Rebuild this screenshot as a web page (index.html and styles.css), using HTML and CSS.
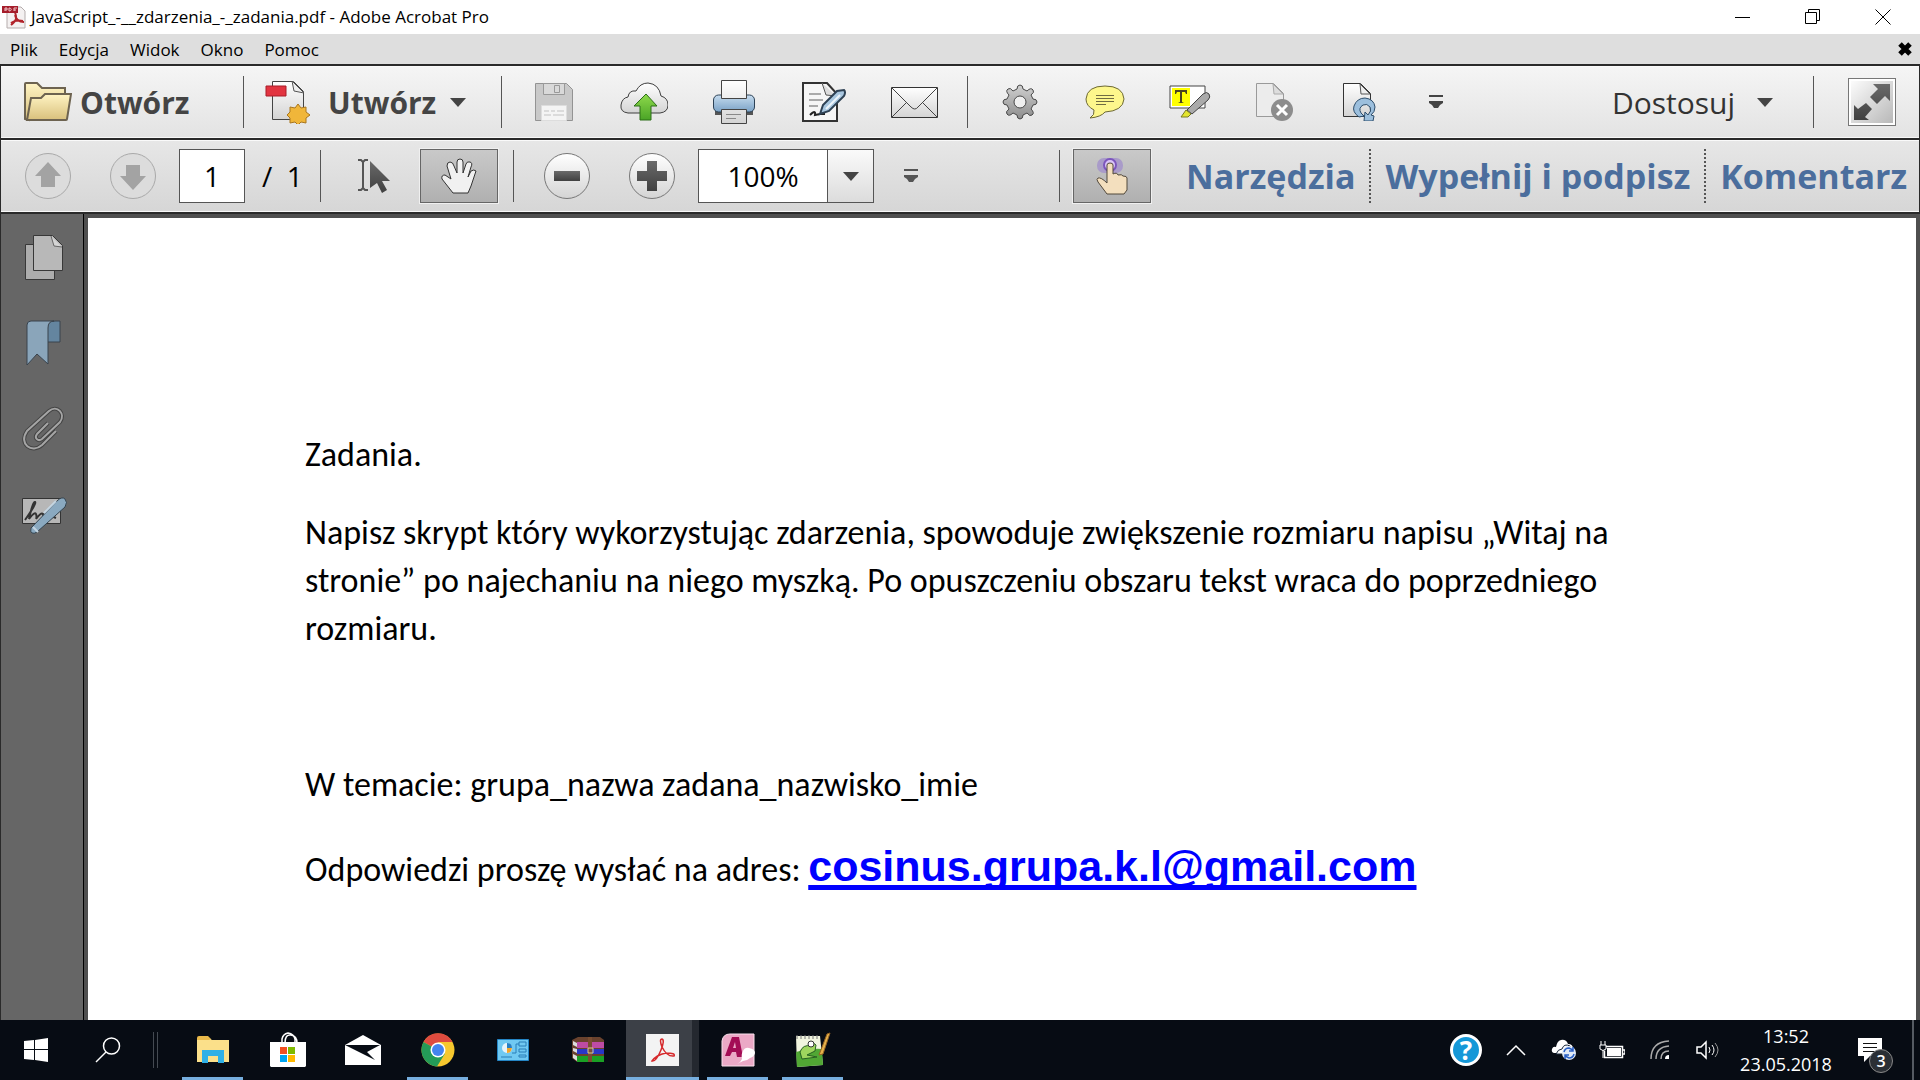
FILE: index.html
```html
<!DOCTYPE html>
<html lang="pl">
<head>
<meta charset="utf-8">
<title>JavaScript_-__zdarzenia_-_zadania.pdf - Adobe Acrobat Pro</title>
<link rel="stylesheet" href="styles.css">
</head>
<body>
<svg class="defs" aria-hidden="true">
  <defs>
    <linearGradient id="paper" x1="0" y1="0" x2="0" y2="1"><stop offset="0" stop-color="#fff"/><stop offset="1" stop-color="#d4d4d4"/></linearGradient>
    <linearGradient id="steel" x1="0" y1="0" x2="0" y2="1"><stop offset="0" stop-color="#d0d0d0"/><stop offset="1" stop-color="#8c8c8c"/></linearGradient>
    <linearGradient id="sky" x1="0" y1="0" x2="0" y2="1"><stop offset="0" stop-color="#c6dcef"/><stop offset="1" stop-color="#7aa2c6"/></linearGradient>
    <linearGradient id="sand" x1="0" y1="0" x2="0" y2="1"><stop offset="0" stop-color="#fff4c4"/><stop offset="1" stop-color="#d8c07c"/></linearGradient>
    <linearGradient id="leaf" x1="0" y1="0" x2="0" y2="1"><stop offset="0" stop-color="#8fda4c"/><stop offset="1" stop-color="#4aa426"/></linearGradient>
    <linearGradient id="ink" x1="0" y1="0" x2="0" y2="1"><stop offset="0" stop-color="#6a6a6a"/><stop offset="1" stop-color="#404040"/></linearGradient>
  </defs>
</svg>

<header class="titlebar">
  <svg class="app-icon" viewBox="0 0 24 24"><path d="M5 2h14l4 4v17H5z" fill="#f4f1f1" stroke="#b5adad"/><path d="M13 7c2 6 2 8-4 13M13 10c1 5 4 7 9 7M9 18c4-3 7-3 12-2" fill="none" stroke="#b1242b" stroke-width="2"/><path d="M0 1h16v7H0z" fill="#a51d2b"/><path d="M3 6V3h2v2H3M7 3v3c3 0 3-3 0-3M12 6V3h3M12 5h2" stroke="#f0c8cc" fill="none"/></svg>
  <h1 class="title">JavaScript_-__zdarzenia_-_zadania.pdf - Adobe Acrobat Pro</h1>
  <div class="window-controls">
    <button aria-label="Minimalizuj"><svg width="16" height="16" viewBox="0 0 16 16"><path d="M0 8.500h15" stroke="#000"/></svg></button>
    <button aria-label="Przywróć"><svg width="16" height="16" viewBox="0 0 16 16"><path d="M.5 3.500h11v11H.5zM3.500 3V.5h11v11H12" fill="none" stroke="#000"/></svg></button>
    <button aria-label="Zamknij"><svg width="16" height="16" viewBox="0 0 16 16"><path d="M.5.5l15 15M15.500.5l-15 15" stroke="#000"/></svg></button>
  </div>
</header>

<nav class="menubar">
  <button>Plik</button><button>Edycja</button><button>Widok</button><button>Okno</button><button>Pomoc</button>
  <button class="close-doc" aria-label="Zamknij dokument"><svg width="14" height="14" viewBox="0 0 14 14"><path d="M2 2l10 10M12 2L2 12" stroke="#000" stroke-width="5"/></svg></button>
</nav>

<section class="toolbar toolbar-main">
  <button class="labelled open"><svg width="48" height="40" viewBox="0 0 48 40"><path d="M1 37V2q0-1 1-1h11l5 5h23v10H10L5 38z" fill="url(#sand)" stroke="#6d6350" stroke-width="2"/><path d="M3 38l4-22h10l4-4h26l-4 25q0 1-1 1z" fill="url(#sand)" stroke="#6d6350" stroke-width="2"/></svg><span>Otwórz</span></button>
  <i class="sep"></i>
  <button class="labelled create"><svg width="46" height="44" viewBox="0 0 46 44"><path d="M7.500 1.500h21l10 10v28h-31z" fill="url(#paper)" stroke="#444"/><path d="M27 1l2 10 10 2z" fill="#eee" stroke="#555"/><path d="M1 6h20v10H1z" fill="#e23440" stroke="#a81d28"/><path d="M33 24l3 4 5-1v5l4 3-4 3v5l-5-1-3 3-3-3-5 1v-5l-3-3 3-3v-5l5 1z" fill="#f0b63a" stroke="#a9761f"/></svg><span>Utwórz</span><svg class="caret" width="16" height="9" viewBox="0 0 16 9"><path d="M0 0h16L8 9z" fill="#444"/></svg></button>
  <i class="sep"></i>
  <div class="tools wide">
    <button aria-label="Zapisz"><svg width="40" height="40" viewBox="0 0 40 40"><path d="M1.500 1.500h31l6 6v31h-37z" fill="#c9c9c9" stroke="#939393"/><path d="M9.500 1.500h21v11h-21zM20.500 3.500h5v7h-5z" fill="#d9d9d9" stroke="#999"/><path d="M7.500 23.500h25v15h-25z" fill="#f4f4f4" stroke="#ddd"/><path d="M10 29h5m2 0h4m2 0h7M10 33h7m2 0h11" stroke="#c2c2c2"/></svg></button>
    <button aria-label="Wyślij do chmury"><svg width="48" height="40" viewBox="0 0 48 40"><path d="M8 31q-8-1-7-8 1-7 7-8 1-7 8-6 4-8 12-8 11 1 13 13 7 2 7 9t-8 8z" fill="url(#paper)" stroke="#3f3f3f"/><path d="M26 12l11 12h-6v14H20V24h-6z" fill="url(#leaf)" stroke="#2c6e18" stroke-width="1"/></svg></button>
    <button aria-label="Drukuj"><svg width="42" height="44" viewBox="0 0 42 44"><path d="M2 31h38v4H2z" fill="#555"/><rect x=".5" y="15" width="41" height="17" rx="5" fill="url(#sky)" stroke="#2d4256"/><path d="M8.500.5h25v18h-25zM8.500 29.500h25v14h-25z" fill="url(#paper)" stroke="#444"/><path d="M13 34.500h15M13 38.500h10" stroke="#888"/></svg></button>
    <button aria-label="Podpisz"><svg width="44" height="42" viewBox="0 0 44 42"><path d="M1 2h24l10 11v27H1z" fill="#f6f6f6" stroke="#333" stroke-width="2"/><path d="M20 2l4 12 10 1" fill="#ddd" stroke="#555"/><path d="M7 13h12M7 19h14M7 25h9" stroke="#aaa" stroke-width="2"/><path d="M8 34q6-6 5 0l5-1h5" fill="none" stroke="#222" stroke-width="2"/><path d="M18 33l3-9 14-14 7-1q2 2 0 6L27 30z" fill="#a9c7e0" stroke="#2e4154" stroke-width="2"/><path d="M24 28l14-14" stroke="#eef5fb" stroke-width="2"/></svg></button>
    <button aria-label="E-mail"><svg width="47" height="31" viewBox="0 0 47 31"><path d="M.5.5h46v30H.5z" fill="url(#paper)" stroke="#333"/><path d="M1 30l14-14M46 30L32 16M1 1l19 19q4 4 7 0L46 1" fill="none" stroke="#444"/></svg></button>
  </div>
  <i class="sep"></i>
  <div class="tools">
    <button aria-label="Ustawienia"><svg width="36" height="36" viewBox="0 0 36 36"><path d="M15 5q0-4 3-4t3 4l4 2q4-4 6-1 2 2-2 5l2 4q4 0 4 3t-4 3l-2 4q4 4 1 6-2 2-5-2l-4 2q0 4-3 4t-3-4l-4-2q-4 4-6 1-2-2 2-5l-2-4q-4 0-4-3t4-3l2-4q-4-4-1-6 2-2 5 2z" fill="url(#steel)" stroke="#484848"/><circle cx="18" cy="18" r="6" fill="#efefef" stroke="#484848"/></svg></button>
    <button aria-label="Komentarz"><svg width="40" height="34" viewBox="0 0 40 34"><path d="M5 33q5-3 4-8Q1 21 1 14 2 1 20 1t19 13q-1 12-19 13-4 5-15 6z" fill="#fdf78c" stroke="#6c6834" stroke-width="1"/><path d="M11 10.500h18M11 13.500h18M11 16.500h18M11 19.500h10" stroke="#706c42"/></svg></button>
    <button aria-label="Wyróżnij tekst"><svg width="42" height="34" viewBox="0 0 42 34"><path d="M1 1h35v22H1z" fill="#fff" stroke="#444" stroke-width="1"/><path d="M3 3h18v18H3z" fill="#ff0"/><path d="M6 9V5h12v4h-1l-1-2h-3v10l2 1H9l2-1V7H8L7 9z" fill="#4a4420"/><path d="M18 25l16-16q4-3 6 0t-1 6L23 29z" fill="#aaa" stroke="#444"/><path d="M12 32l5-7 5 4-3 3z" fill="#e4e52d" stroke="#777a24"/></svg></button>
    <button aria-label="Usuń strony"><svg width="38" height="38" viewBox="0 0 38 38"><path d="M.5.5h17l10 10v23H.5z" fill="#ececec" stroke="#9a9a9a"/><path d="M17 1l1 10h9z" fill="#ddd" stroke="#aaa"/><circle cx="26" cy="27" r="11" fill="#8d8d8d"/><path d="M21 22l10 10M31 22L21 32" stroke="#fff" stroke-width="3"/></svg></button>
    <button aria-label="Obróć strony"><svg width="34" height="38" viewBox="0 0 34 38"><path d="M.5.5h17l10 10v23H.5z" fill="url(#paper)" stroke="#333"/><path d="M17 1l1 10h9z" fill="#eee" stroke="#555"/><path d="M16 34Q9 29 11 23q3-8 11-8 9 1 10 9 0 5-4 8l3 1-1 5h-9l1-9 3 3q4-4 2-8-3-4-7-2-5 3-2 8l3 3z" fill="#9cbfdd" stroke="#2d4d6b"/></svg></button>
  </div>
  <button class="more" aria-label="Więcej"><svg width="16" height="16" viewBox="0 0 16 16"><path d="M1 1h14v2H1zM1 7h14v2l-3 2-2 3H6l-2-3-3-2z" fill="#444"/></svg></button>
  <div class="right">
    <button class="customize">Dostosuj<svg class="caret" width="16" height="9" viewBox="0 0 16 9"><path d="M0 0h16L8 9z" fill="#444"/></svg></button>
    <i class="sep"></i>
    <button class="fullscreen" aria-label="Tryb czytania"><svg width="42" height="42" viewBox="0 0 42 42"><path d="M22 3h17v17l-5-5-8 8-7-7 8-8zM3 39V24l4 4 8-6 6 6-7 8 4 3z" fill="url(#ink)"/></svg></button>
  </div>
</section>

<section class="toolbar toolbar-nav">
  <div class="tools">
    <button aria-label="Poprzednia strona"><svg width="48" height="48" viewBox="0 0 48 48"><circle cx="24" cy="24" r="22.500" fill="#dcdcdc" stroke="#a9a9a9"/><path d="M24 10l13 14h-6v11H17V24h-6z" fill="#a3a3a3"/></svg></button>
    <button aria-label="Następna strona"><svg width="48" height="48" viewBox="0 0 48 48"><circle cx="24" cy="24" r="22.500" fill="#dcdcdc" stroke="#a9a9a9"/><path d="M24 38L11 24h6V13h14v11h6z" fill="#a3a3a3"/></svg></button>
  </div>
  <input class="page-number" aria-label="Numer strony" value="1">
  <span class="page-total">/&nbsp; 1</span>
  <i class="sep"></i>
  <button class="select" aria-label="Zaznacz"><svg width="34" height="34" viewBox="0 0 34 34"><path d="M1 1h3l2 2 2-2h3M6 3v26M1 31h3l2-2 2 2h3" fill="none" stroke="#555" stroke-width="2"/><path d="M13 2l20 20h-8l5 9-5 3-5-10-7 5z" fill="url(#ink)"/></svg></button>
  <button class="pressed hand" aria-label="Rączka"><svg width="38" height="36" viewBox="0 0 38 36"><path d="M13 35L2 21q-1-4 3-4l6 4L7 8q0-4 3-4t4 4l3 7V4q0-3 3-3t3 3v11l3-9q1-3 4-2t1 5l-3 10 3-6q3-2 5 0l-5 15-3 7z" fill="#f1f1f1" stroke="#333"/></svg></button>
  <i class="sep"></i>
  <div class="tools zoom">
    <button aria-label="Pomniejsz"><svg width="48" height="48" viewBox="0 0 48 48"><circle cx="24" cy="24" r="22.500" fill="url(#paper)" stroke="#777"/><path d="M11 19h26v10H11z" fill="url(#ink)"/></svg></button>
    <button aria-label="Powiększ"><svg width="48" height="48" viewBox="0 0 48 48"><circle cx="24" cy="24" r="22.500" fill="url(#paper)" stroke="#777"/><path d="M19 9h10v10h10v10H29v10H19V29H9V19h10z" fill="url(#ink)"/></svg></button>
  </div>
  <div class="zoom-box"><input aria-label="Powiększenie" value="100%"><button aria-label="Wybierz powiększenie"><svg width="16" height="9" viewBox="0 0 16 9"><path d="M0 0h16L8 9z" fill="#444"/></svg></button></div>
  <button class="more" aria-label="Więcej"><svg width="16" height="16" viewBox="0 0 16 16"><path d="M1 1h14v2H1zM1 7h14v2l-3 2-2 3H6l-2-3-3-2z" fill="#555"/></svg></button>
  <div class="right panes">
    <i class="sep"></i>
    <button class="pressed touch" aria-label="Tryb dotykowy"><svg width="32" height="38" viewBox="0 0 32 38"><rect x="1" y="1" width="26" height="15" rx="7" fill="#a99bc9"/><circle cx="14" cy="8" r="6" fill="#d9c3f7" stroke="#7c55bd" stroke-width="2"/><path d="M11 37L2 25q-2-3 0-4 3-1 9 5V8q0-2 3-2t3 2v9q4-2 5 1 4-1 5 1 4 0 4 2v12l-3 4z" fill="#f3dfbe" stroke="#51483b"/></svg></button>
    <button class="pane">Narzędzia</button>
    <button class="pane">Wypełnij i podpisz</button>
    <button class="pane">Komentarz</button>
  </div>
</section>

<main class="workspace">
  <nav class="sidebar">
    <button aria-label="Miniatury stron"><svg width="40" height="46" viewBox="0 0 40 46"><path d="M1.500 10.500h29v35h-29z" fill="#adadad" stroke="#383838"/><path d="M9.500 1.500h19l10 10v25h-29z" fill="#b8b8b8" stroke="#383838"/><path d="M27 2l3 10 8 1" fill="#d5d5d5" stroke="#666"/></svg></button>
    <button aria-label="Zakładki"><svg width="36" height="46" viewBox="0 0 36 46"><path d="M21 4q3-3 8-3h5v21H21z" fill="#64859f" stroke="#38424c"/><path d="M1 45V5q0-4 4-4h23q-6 0-6 7v36l-11-10z" fill="#8aa5ba" stroke="none"/><path d="M22 22v22l-11-10L1 45V5q0-4 4-4h23q-6 0-6 7z" fill="#8aa5ba" stroke="#38424c"/></svg></button>
    <button aria-label="Załączniki"><svg width="44" height="46" viewBox="0 0 44 46"><path d="M34 25L20 39c-10 9-24-1-15-14L27 5c8-7 17 3 11 11L20 33c-4 3-8-1-5-5l11-11" fill="none" stroke="#444" stroke-width="4"/><path d="M34 25L20 39c-10 9-24-1-15-14L27 5c8-7 17 3 11 11L20 33c-4 3-8-1-5-5l11-11" fill="none" stroke="#a5a5a5" stroke-width="2"/></svg></button>
    <button aria-label="Podpisy"><svg width="46" height="40" viewBox="0 0 46 40"><path d="M1.500 3.500h38v25h-38z" fill="#b7b7b7" stroke="#333"/><path d="M4 25Q16 8 14 7t-6 17q6-8 7-5t0 5q5-7 7-5 0 5 6 1l7 3" fill="none" stroke="#333" stroke-width="2"/><path d="M10 33L36 6q5-5 8-2t0 8L16 37q-3 2-5 1t-1-5z" fill="#8aa9c0" stroke="#344450"/><path d="M23 18L35 6M12 32l5 5" stroke="#c4d5e2" stroke-width="2"/></svg></button>
  </nav>
  <article class="page">
    <p>Zadania.</p>
    <p class="task">Napisz skrypt który wykorzystując zdarzenia, spowoduje zwiększenie rozmiaru napisu „Witaj na<br>stronie” po najechaniu na niego myszką. Po opuszczeniu obszaru tekst wraca do poprzedniego<br>rozmiaru.</p>
    <p class="subject">W temacie: grupa_nazwa zadana_nazwisko_imie</p>
    <p class="answer">Odpowiedzi proszę wysłać na adres: <a href="mailto:cosinus.grupa.k.l@gmail.com">cosinus.grupa.k.l@gmail.com</a></p>
  </article>
</main>

<footer class="taskbar">
  <button class="start" aria-label="Start"><svg width="24" height="24" viewBox="0 0 24 24"><path d="M0 3l10-1v9H0zM11 2l13-2v11H11zM0 12h10v10L0 21zM11 12h13v12l-13-2z" fill="#fff"/></svg></button>
  <button class="search" aria-label="Wyszukaj"><svg width="26" height="26" viewBox="0 0 26 26"><circle cx="16.500" cy="9" r="8" fill="none" stroke="#fff" stroke-width="1.500"/><path d="M11 15L1 25" stroke="#fff" stroke-width="1.500"/></svg></button>
  <i class="grip"></i>
  <div class="apps">
    <button class="running" aria-label="Eksplorator plików"><svg width="32" height="28" viewBox="0 0 32 28"><path d="M0 2h12l3 2h17v22H0z" fill="#fbe08a"/><path d="M0 2q0-2 2-2h9l3 3-2 1H0z" fill="#e9b94a"/><path d="M5 14h22v13h-6v-7H11v7H5z" fill="#2fb0e6"/></svg></button>
    <button aria-label="Sklep"><svg width="36" height="36" viewBox="0 0 36 36"><path d="M0 10h36v24l-1 1H1l-1-1z" fill="#fff"/><path d="M12 11V7q1-5 6-6 6 1 7 6v4M15 11q0-9 6-8 6 1 6 8" fill="none" stroke="#fff" stroke-width="1.500"/><path d="M10 15h7v7h-7z" fill="#f25022"/><path d="M18 15h7v7h-7z" fill="#7fba00"/><path d="M10 23h7v7h-7z" fill="#00a4ef"/><path d="M18 23h7v7h-7z" fill="#ffb900"/></svg></button>
    <button aria-label="Poczta"><svg width="36" height="30" viewBox="0 0 36 30"><path d="M0 10L18 0l18 10v20H0z" fill="#fff"/><path d="M1 10h34l-13 7 8 8L0 10z" fill="#070c14"/></svg></button>
    <button class="running" aria-label="Chrome"><svg width="34" height="34" viewBox="0 0 34 34"><circle cx="17" cy="17" r="16.500" fill="#f7c82e"/><path d="M17 17L2.500 9a16.500 16.500 0 0 1 29 0z" fill="#de4b3f"/><path d="M17 17L2.500 9A16.500 16.500 0 0 0 16 33.500l8-13z" fill="#249b57"/><path d="M17 9h14.500L24 20z" fill="#f7c82e"/><circle cx="17" cy="17" r="7.500" fill="#fff"/><circle cx="17" cy="17" r="6" fill="#4484ef"/></svg></button>
    <button aria-label="Panel sterowania"><svg width="32" height="22" viewBox="0 0 32 22"><path d="M.5.5h31v21H.5z" fill="#70c9f2" stroke="#2485c5"/><circle cx="10" cy="9" r="5" fill="#e7f4fb"/><path d="M10 9V4q5 0 5 5z" fill="#267fc4"/><path d="M10 9h5q-1 5-5 5z" fill="#f4a62a"/><path d="M15 14h4V5h3m0-2h7v4h-7zm0 7h7v3h-7zm0 6h7v2h-7zM4 18h11" fill="none" stroke="#287fb8"/></svg></button>
    <button aria-label="WinRAR"><svg width="32" height="26" viewBox="0 0 32 26"><path d="M0 3l6-3h22l4 3v22H5L0 21z" fill="#69422e"/><path d="M5 5h27v6H5z" fill="#bd4ba4"/><path d="M5 12h27v5H5z" fill="#2937c7"/><path d="M5 19h27v6H5z" fill="#1aa124"/><path d="M1 4l4 2v4L1 8zm0 7l4 1v4l-4-2zm0 6l4 2v5l-4-3z" fill="#ddd"/><path d="M16 0h4v25h-4z" fill="#7a4d31"/><path d="M16 11h5v5h-5z" fill="none" stroke="#d9cc94"/></svg></button>
    <button class="running active" aria-label="Acrobat"><svg width="33" height="32" viewBox="0 0 33 32"><path d="M0 0h33v32H0z" fill="#f3f3f3"/><path d="M16 5q-3 0 0 8 5 10 12 9 2-3-8-3-10 2-14 8 4 1 9-11 4-10 1-11z" fill="none" stroke="#d62a2d" stroke-width="1.500"/></svg></button>
    <button class="running" aria-label="Access"><svg width="34" height="34" viewBox="0 0 34 34"><path d="M1 8q1-7 8-7h24v32H1z" fill="#eba9c6" stroke="#fae1ec"/><path d="M4 23l7-19h7l4 20h-6l-1-5h-4l-2 4zm8-8h3l-1-6z" fill="#a30d55"/><path d="M16 31q4-2 5-5-1-5 1-8 2-4 6-3 6 1 6 5-1 4-5 5-3 3-7 3z" fill="#fff"/></svg></button>
    <button class="running" aria-label="Notepad++"><svg width="36" height="36" viewBox="0 0 36 36"><path d="M1 4h24l3 29-26 2z" fill="#f1f5df"/><path d="M1 20q15-4 26-3l1 16-26 2z" fill="#51a734"/><path d="M2 3v4m4-4v4m4-4v4m4-4v4m4-4v4m4-4v4" stroke="#777"/><path d="M5 20q3-8 11-6 1-5 5-1l-1 6-8 4 10 2-15 2z" fill="#9fd55e" stroke="#276122"/><circle cx="16" cy="12" r="3" fill="#fff" stroke="#333"/><path d="M24 23L32 2l3-1-7 21z" fill="#e5b14b" stroke="#956322"/></svg></button>
  </div>
  <div class="tray">
    <button class="help" aria-label="Pomoc">?</button>
    <button aria-label="Pokaż ukryte ikony"><svg width="20" height="12" viewBox="0 0 20 12"><path d="M1 11l9-9 9 9" fill="none" stroke="#fff" stroke-width="1.500"/></svg></button>
    <button aria-label="OneDrive"><svg width="26" height="22" viewBox="0 0 26 22"><path d="M3 14q-3-1-2-4 1-3 4-2 1-6 5-7 5-1 7 4 5 0 5 5v4z" fill="#fff"/><path d="M5 15q2-5 6-5 2-6 8-3l3 8z" fill="#fff" stroke="#182638"/><circle cx="18" cy="14" r="7" fill="#e1eaf8"/><path d="M13 13q1-4 5-4l4 2m0-3v4h-4M23 15q-1 4-5 4l-4-2m0 3v-4h4" fill="none" stroke="#285fc4" stroke-width="1.500"/></svg></button>
    <button aria-label="Bateria"><svg width="26" height="18" viewBox="0 0 26 18"><path d="M5.500 5.500h18v11h-18v-7M24 9h2v4h-2" fill="none" stroke="#fff" stroke-width="1.500"/><path d="M8 7h14v8H8z" fill="#fff"/><path d="M2 0v4M6 0v4M1 4h6v4q-3 3-6 0zM4 9v8" stroke="#fff" fill="#070c14"/></svg></button>
    <button aria-label="Sieć"><svg width="20" height="20" viewBox="0 0 20 20"><path d="M1 19Q1 2 19 1M6 19Q6 7 19 6M11 19q0-8 8-8" fill="none" stroke="#aaa" stroke-width="1.500"/><path d="M15 19q0-4 4-4v4z" fill="#fff"/></svg></button>
    <button aria-label="Głośność"><svg width="24" height="20" viewBox="0 0 24 20"><path d="M1 7h4l5-5v16l-5-5H1z" fill="none" stroke="#fff" stroke-width="1.500"/><path d="M13 7q2 3 0 6M16 5q4 5 0 10" fill="none" stroke="#fff"/><path d="M19 3q6 7 0 14" fill="none" stroke="#999"/></svg></button>
    <time class="clock"><span>13:52</span><span>23.05.2018</span></time>
    <button class="notifications" aria-label="Powiadomienia"><svg width="24" height="24" viewBox="0 0 24 24"><path d="M0 0h24v18H12l-6 6v-6H0z" fill="#fff"/><path d="M5 5.500h14M5 9.500h14M5 13.500h14" stroke="#111"/></svg><span class="badge">3</span></button>
    <i class="show-desktop"></i>
  </div>
</footer>
</body>
</html>
```

FILE: styles.css
```css
* { box-sizing: border-box; }

body {
  display: flex;
  flex-direction: column;
  height: 100vh;
  margin: 0;
  overflow: hidden;
  font-family: "Open Sans", "Noto Sans", sans-serif;
  color: #000;
}

button, input { margin: 0; padding: 0; border: 0; background: none; font: inherit; color: inherit; }
button { display: flex; align-items: center; justify-content: center; flex: none; }
svg { display: block; flex: none; }
.defs { position: absolute; width: 0; height: 0; }

/* Title and menu */
.titlebar { display: flex; align-items: center; flex: none; height: 34px; padding-left: 2px; background: #fff; }
.app-icon { width: 24px; height: 24px; }
.title { flex: 1; margin: 0 0 0 5px; font-size: 17px; font-weight: 400; line-height: 34px; white-space: nowrap; }
.window-controls { display: flex; padding-right: 2px; }
.window-controls button { width: 70px; height: 34px; }

.menubar { display: flex; align-items: center; flex: none; gap: 21px; height: 30px; padding: 0 8px 0 10px; background: #dedede; font-size: 17px; }
.menubar button { height: 30px; }
.menubar .close-doc { margin-left: auto; }

/* Toolbars */
.toolbar {
  display: flex;
  align-items: center;
  flex: none;
  height: 74px;
  border: 1px solid #2a2a2a;
  border-top-width: 2px;
  border-bottom: 0;
  box-shadow: inset 0 -1px #f8f8f8, inset 0 1px #fafafa;
}
.toolbar-main { background: linear-gradient(#f5f5f5, #e3e3e3); }
.toolbar-nav { background: linear-gradient(#e7e7e7, #d6d6d6); }
.sep { flex: none; width: 1px; height: 52px; background: #555; }
.labelled { justify-content: flex-start; font-size: 30px; font-weight: 700; color: #444; }
.open { width: 242px; padding-left: 23px; gap: 8px; }
.create { width: 257px; padding-left: 21px; gap: 17px; }
.create .caret { margin-left: -3px; }
.tools { display: flex; }
.tools button { width: 85px; height: 54px; }
.tools.wide { padding: 0 8px 0 7px; }
.tools.wide button { width: 90px; }
.toolbar-main .tools:not(.wide) { padding-left: 9px; }
.more { width: 68px; height: 54px; }
.right { display: flex; align-items: center; margin-left: auto; }
.customize { gap: 22px; padding-right: 40px; font-size: 30px; color: #333; }
.fullscreen { width: 48px; height: 48px; margin: 0 23px 0 34px; border: 1px solid #777; background: linear-gradient(135deg, #fff, #b5b5b5); box-shadow: inset 0 0 0 2px #fff; }

.toolbar-nav .tools:first-child { padding-left: 4px; }
.page-number { width: 66px; height: 54px; margin-left: 4px; border: 1px solid #555; background: #fff; font-size: 28px; text-align: center; }
.page-total { width: 75px; padding-left: 17px; font-size: 28px; white-space: nowrap; }
.select { width: 99px; height: 54px; padding-left: 7px; }
.pressed { width: 78px; height: 54px; border: 1px solid #666; background: linear-gradient(#c9c9c9, #b0b0b0); box-shadow: 0 0 0 1px #f0f0f0; }
.hand { margin-right: 15px; }
.zoom { padding-left: 10px; }
.zoom-box { display: flex; width: 176px; height: 54px; margin-left: 4px; border: 1px solid #555; background: #fff; }
.zoom-box input { flex: 1; min-width: 0; font-size: 28px; text-align: center; }
.zoom-box button { width: 46px; border-left: 1px solid #555; background: linear-gradient(#fafafa, #dcdcdc); }
.toolbar-nav .more { width: 74px; }
.touch { margin: 0 21px 0 13px; }
.pane { height: 54px; padding: 0 14px; font-size: 34px; font-weight: 700; color: #4b6e9d; white-space: nowrap; }
.pane + .pane { border-left: 2px dotted #555; }
.pane:last-child { padding-right: 12px; }

/* Document */
.workspace { display: flex; flex: 1; min-height: 0; border-top: 2px solid #2a2a2a; background: #4f4f4f; }
.sidebar { flex: none; width: 84px; border-left: 1px solid #2a2a2a; border-right: 1px solid #000; background: #666; }
.sidebar button { width: 82px; height: 86px; padding-left: 4px; }
.page {
  flex: 1;
  margin: 4px 4px 0;
  padding: 213px 0 0 217px;
  background: #fff;
  font-family: Carlito, Lato, sans-serif;
  font-size: 34px;
  line-height: 48px;
  white-space: nowrap;
}
.page p { margin: 0 0 30px; }
.page .task { margin-bottom: 108px; }
.page .subject { margin-bottom: 33px; }
.page a { font-family: "Liberation Sans", Arial, sans-serif; font-size: 43px; font-weight: 700; color: #00f; text-decoration-thickness: 5px; text-underline-offset: 4px; text-decoration-skip-ink: none; }

/* Taskbar */
.taskbar { display: flex; align-items: center; flex: none; height: 60px; background: #070c14; color: #fff; }
.taskbar button { height: 60px; }
.start, .search { width: 72px; }
.grip { width: 5px; height: 36px; margin: 0 17px 0 9px; border: 1px solid #444a52; border-width: 0 1px; }
.apps { display: flex; }
.apps button { width: 75px; }
.apps .running { background: linear-gradient(#76aede, #76aede) center bottom / 61px 3px no-repeat; }
.apps .active { border: 0 solid #070c14; border-width: 0 1px; background: linear-gradient(#76aede, #76aede) center bottom / 100% 3px no-repeat, linear-gradient(90deg, #3c4047 66px, #24282f 66px); }
.tray { display: flex; align-items: center; margin-left: auto; font-size: 18px; }
.tray button { width: 48px; }
.tray .help { width: 32px; height: 32px; margin-right: 10px; border: 3px solid #fff; border-radius: 50%; background: #1598d8; font-size: 26px; font-weight: 700; line-height: 26px; }
.clock { display: flex; flex-direction: column; align-items: center; width: 108px; line-height: 28px; }
.tray .notifications { position: relative; width: 60px; }
.badge { position: absolute; left: 29px; top: 29px; width: 24px; height: 24px; border: 1px solid #888; border-radius: 50%; background: #2b2f35; font-size: 16px; font-weight: 600; line-height: 22px; text-align: center; }
.show-desktop { width: 8px; height: 60px; margin-left: 12px; border-left: 2px solid #555b63; }
```
